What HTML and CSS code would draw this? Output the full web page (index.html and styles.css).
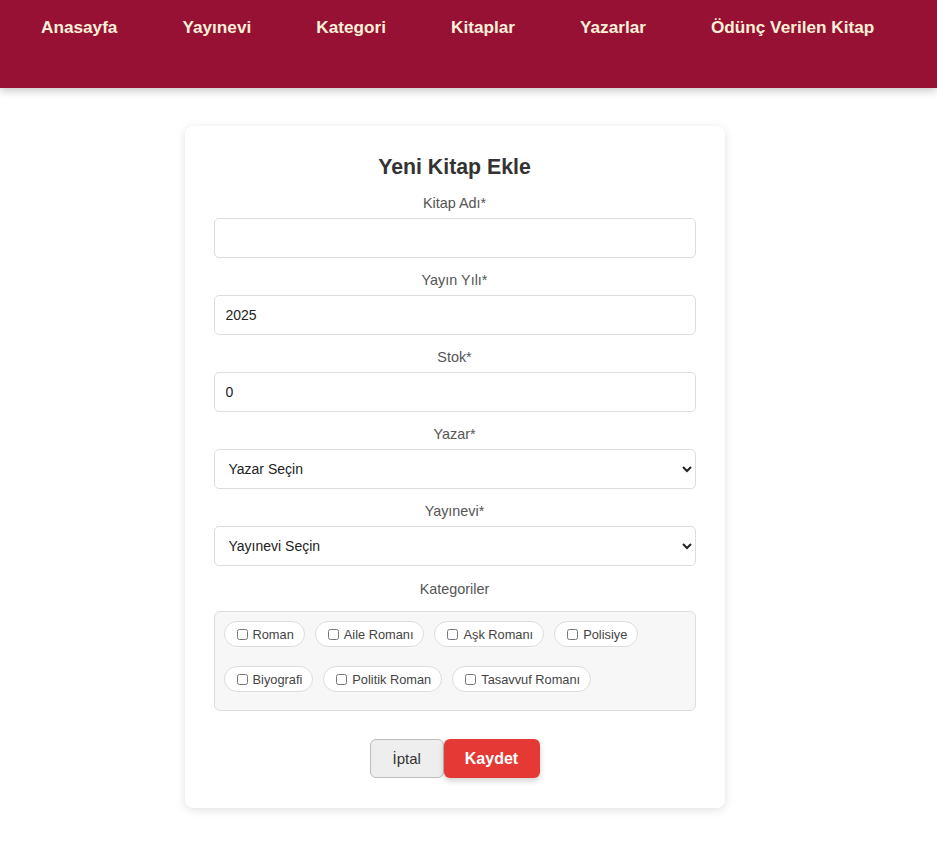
FILE: index.html
```html
<!DOCTYPE html>
<html lang="tr">
<head>
<meta charset="utf-8">
<title>Yeni Kitap Ekle</title>
<link rel="stylesheet" href="styles.css">
</head>
<body>
<nav class="navbar">
  <ul class="nav-list">
    <li><a href="#">Anasayfa</a></li>
    <li><a href="#">Yayınevi</a></li>
    <li><a href="#">Kategori</a></li>
    <li><a href="#">Kitaplar</a></li>
    <li><a href="#">Yazarlar</a></li>
    <li><a href="#">Ödünç Verilen Kitap</a></li>
  </ul>
</nav>
<main class="page">
  <form class="card">
    <h2 class="card-title">Yeni Kitap Ekle</h2>
    <label class="field-label">Kitap Adı*</label>
    <input class="field" type="text">
    <label class="field-label">Yayın Yılı*</label>
    <input class="field" type="text" value="2025">
    <label class="field-label">Stok*</label>
    <input class="field" type="text" value="0">
    <label class="field-label">Yazar*</label>
    <select class="field select"><option>Yazar Seçin</option></select>
    <label class="field-label">Yayınevi*</label>
    <select class="field select"><option>Yayınevi Seçin</option></select>
    <label class="field-label cat-label">Kategoriler</label>
    <div class="cat-box">
      <label class="chip"><input type="checkbox"><span>Roman</span></label>
      <label class="chip"><input type="checkbox"><span>Aile Romanı</span></label>
      <label class="chip"><input type="checkbox"><span>Aşk Romanı</span></label>
      <label class="chip"><input type="checkbox"><span>Polisiye</span></label>
      <label class="chip"><input type="checkbox"><span>Biyografi</span></label>
      <label class="chip"><input type="checkbox"><span>Politik Roman</span></label>
      <label class="chip"><input type="checkbox"><span>Tasavvuf Romanı</span></label>
    </div>
    <div class="actions">
      <button type="button" class="btn btn-cancel">İptal</button>
      <button type="button" class="btn btn-save">Kaydet</button>
    </div>
  </form>
</main>
</body>
</html>
```
FILE: styles.css
```css
* { box-sizing: border-box; }
html, body { margin: 0; padding: 0; background: #fff; }
body { font-family: "Liberation Sans", Arial, sans-serif; color: #333; }

.navbar {
  height: 88px;
  background: #961134;
  box-shadow: 0 3px 8px rgba(0,0,0,0.22);
}
.nav-list {
  list-style: none;
  margin: 0;
  padding: 17px 0 0 41px;
  display: flex;
  gap: 65px;
}
.nav-list a {
  color: #fdf0d8;
  text-decoration: none;
  font-weight: bold;
  font-size: 17.2px;
  line-height: 20px;
}

.page {
  display: flex;
  justify-content: center;
  padding: 38px 28px 40px 0;
}
.card {
  width: 540px;
  background: #fff;
  border-radius: 8px;
  box-shadow: 0 2px 10px rgba(0,0,0,0.12);
  padding: 29px 29px 30px;
  display: flex;
  flex-direction: column;
}
.card-title {
  margin: 0 0 15px;
  text-align: center;
  font-size: 21.3px;
  line-height: 25px;
  font-weight: bold;
  color: #333;
}
.field-label {
  display: block;
  text-align: center;
  font-size: 14.4px;
  line-height: 17px;
  color: #555;
  margin-bottom: 6px;
}
.field {
  width: 100%;
  height: 40px;
  margin: 0 0 14px;
  padding: 0 11px;
  border: 1px solid #ddd;
  border-radius: 5px;
  background: #fff;
  font-family: "Liberation Sans", Arial, sans-serif;
  font-size: 14px;
  color: #222;
}
.select { padding: 0 10px; }
.cat-label { margin: 1px 0 13px; }
.cat-box {
  display: flex;
  flex-wrap: wrap;
  column-gap: 10px;
  row-gap: 19px;
  padding: 9px 9px 18px;
  background: #f7f7f7;
  border: 1px solid #ddd;
  border-radius: 6px;
}
.chip {
  display: inline-flex;
  align-items: center;
  gap: 5px;
  height: 26px;
  padding: 0 10px 0 12px;
  background: #fff;
  border: 1px solid #ddd;
  border-radius: 14px;
  font-size: 12.8px;
  color: #444;
}
.chip input {
  margin: 0;
  width: 11px;
  height: 11px;
}
.actions {
  display: flex;
  justify-content: center;
  align-items: center;
  margin-top: 28px;
}
.btn {
  height: 39px;
  border-radius: 6px;
  font-family: "Liberation Sans", Arial, sans-serif;
  cursor: pointer;
}
.btn-cancel {
  background: #eee;
  border: 1px solid #bbb;
  color: #333;
  font-size: 15px;
  padding: 0 22px;
  width: 74px;
}
.btn-save {
  background: #e53935;
  border: none;
  color: #fff;
  font-weight: bold;
  font-size: 16px;
  width: 96px;
  box-shadow: 0 3px 6px rgba(0,0,0,0.18);
}
```
